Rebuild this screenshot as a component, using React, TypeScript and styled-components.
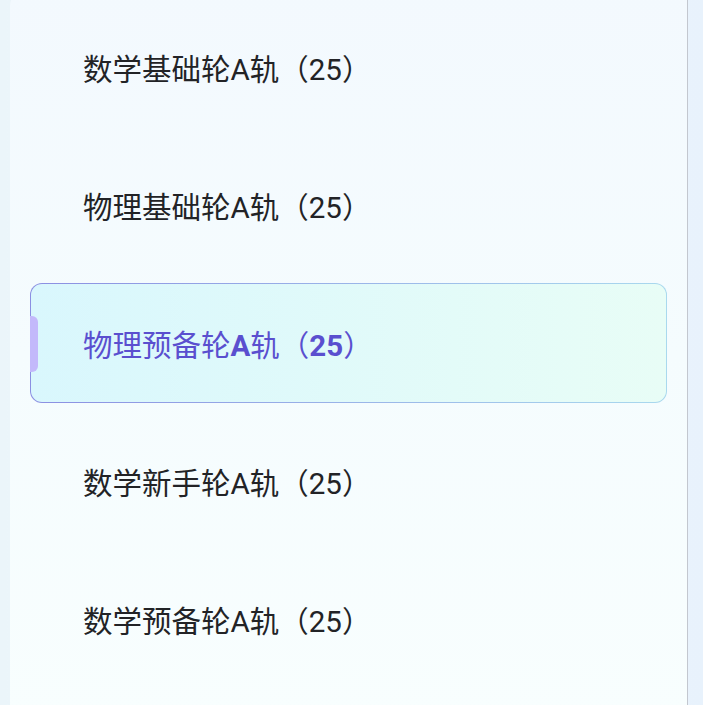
import React, { useState } from "react";
import styled, { createGlobalStyle } from "styled-components";

const GlobalStyle = createGlobalStyle`
  html, body {
    margin: 0;
    padding: 0;
    height: 100%;
    overflow: hidden;
  }
  body {
    background: linear-gradient(90deg, #ebf5fa 0%, #eef7fc 50%, #e8f2fc 100%);
    font-family: Roboto, "Noto Sans CJK SC", sans-serif;
  }
`;

const tracks = [
  "数学基础轮A轨（25）",
  "物理基础轮A轨（25）",
  "物理预备轮A轨（25）",
  "数学新手轮A轨（25）",
  "数学预备轮A轨（25）",
];

// latin letters and digits are set bolder in the active row
const splitRuns = (text: string) => text.split(/([A-Za-z0-9]+)/).filter(Boolean);

export default function App() {
  const [active, setActive] = useState(2);

  return (
    <>
      <GlobalStyle />
      <Panel>
        <TrackList>
          {tracks.map((name, i) => {
            const isActive = i === active;
            return (
              <TrackItem key={name} $active={isActive} onClick={() => setActive(i)}>
                {isActive ? <ActiveMark /> : null}
                <TrackName $active={isActive}>
                  {splitRuns(name).map((part, j) =>
                    /^[A-Za-z0-9]+$/.test(part) ? (
                      <Latin key={j} $active={isActive}>
                        {part}
                      </Latin>
                    ) : (
                      <React.Fragment key={j}>{part}</React.Fragment>
                    )
                  )}
                </TrackName>
              </TrackItem>
            );
          })}
        </TrackList>
      </Panel>
    </>
  );
}

const Panel = styled.div`
  margin: -10px 0 0 10px;
  width: 677px;
  height: 730px;
  border-radius: 16px 0 0 0;
  border-right: 1px solid #c3c7cf;
  background: linear-gradient(180deg, #f3f9fe 0%, #f5fcfe 50%, #f8fefe 100%);
  overflow: hidden;
`;

const TrackList = styled.ul`
  list-style: none;
  margin: 0;
  padding: 17px 20px 0;
  display: flex;
  flex-direction: column;
  gap: 18px;
`;

const TrackItem = styled.li<{ $active: boolean }>`
  position: relative;
  box-sizing: border-box;
  height: 120px;
  display: flex;
  align-items: center;
  padding-left: 52px;
  border-radius: 12px;
  cursor: pointer;
  border: 1px solid transparent;
  background: ${(p) =>
    p.$active
      ? "linear-gradient(90deg, #d9f7fd, #e8fdf6) padding-box, linear-gradient(90deg, #8b8fe2, #a9d9ee) border-box"
      : "transparent"};
`;

const ActiveMark = styled.span`
  position: absolute;
  left: -1px;
  top: 32px;
  width: 8px;
  height: 56px;
  border-radius: 0 6px 6px 0;
  background: #c3b9fb;
`;

const TrackName = styled.span<{ $active: boolean }>`
  font-size: 29.5px;
  font-weight: 400;
  color: ${(p) => (p.$active ? "#5a4fcf" : "#222326")};
`;

const Latin = styled.span<{ $active: boolean }>`
  font-weight: ${(p) => (p.$active ? 700 : 400)};
`;
